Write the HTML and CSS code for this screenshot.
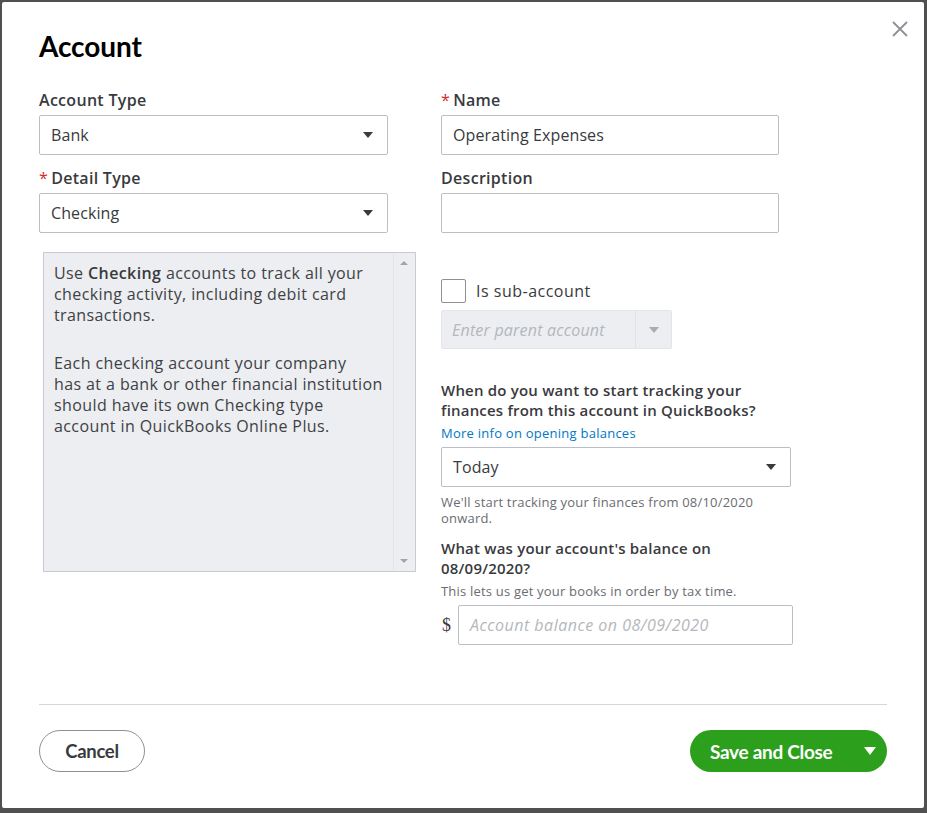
FILE: index.html
```html
<!DOCTYPE html>
<html>
<head>
<meta charset="utf-8">
<link rel="stylesheet" href="styles.css">
</head>
<body>
<div class="modal">
  <button class="close" aria-label="Close">
    <svg width="18" height="18" viewBox="0 0 18 18"><path d="M2 2 L16 16 M16 2 L2 16" stroke="#8d9096" stroke-width="1.8" fill="none"/></svg>
  </button>
  <h1 class="title">Account</h1>
  <div class="columns">
    <div class="col-left">
      <label class="label">Account Type</label>
      <div class="select">
        <span>Bank</span>
        <span class="caret"></span>
      </div>
      <label class="label label-gap"><span class="req">*</span>Detail Type</label>
      <div class="select">
        <span>Checking</span>
        <span class="caret"></span>
      </div>
      <div class="detail-box">
        <div class="detail-text">
          <p>Use <b>Checking</b> accounts to track all your checking activity, including debit card transactions.</p>
          <p>Each checking account your company<br>has at a bank or other financial institution<br>should have its own Checking type<br>account in QuickBooks Online Plus.</p>
        </div>
        <div class="scrollbar">
          <span class="sb-up"></span>
          <span class="sb-down"></span>
        </div>
      </div>
    </div>
    <div class="col-right">
      <label class="label"><span class="req">*</span>Name</label>
      <div class="input input-name">Operating Expenses</div>
      <label class="label label-gap">Description</label>
      <div class="input input-name"></div>
      <div class="check-row">
        <span class="checkbox"></span>
        <span class="check-label">Is sub-account</span>
      </div>
      <div class="parent">
        <span class="parent-text">Enter parent account</span>
        <span class="parent-btn"><span class="caret caret-light"></span></span>
      </div>
      <div class="question">When do you want to start tracking your finances from this account in QuickBooks?</div>
      <a class="link">More info on opening balances</a>
      <div class="select select-wide">
        <span>Today</span>
        <span class="caret"></span>
      </div>
      <div class="help">We'll start tracking your finances from 08/10/2020 onward.</div>
      <div class="question question2">What was your account's balance on 08/09/2020?</div>
      <div class="help help2">This lets us get your books in order by tax time.</div>
      <div class="balance-row">
        <span class="dollar">$</span>
        <div class="input input-balance"><span class="placeholder">Account balance on 08/09/2020</span></div>
      </div>
    </div>
  </div>
  <div class="footer">
    <button class="btn-cancel">Cancel</button>
    <button class="btn-save"><span>Save and Close</span><span class="caret caret-white"></span></button>
  </div>
</div>
</body>
</html>
```

FILE: styles.css
```css
* { box-sizing: border-box; }
html, body { margin: 0; padding: 0; }
body {
  background: #505050;
  width: 927px;
  height: 813px;
  overflow: hidden;
  font-family: "Open Sans", Lato, sans-serif;
  color: #393a3d;
  padding: 2px 3px 0 2px;
}
.modal {
  position: relative;
  background: #fff;
  height: 806px;
  border-radius: 2px;
  padding: 0 37px;
}
.close {
  position: absolute;
  top: 18px;
  right: 15px;
  border: 0;
  background: none;
  padding: 0;
  width: 18px;
  height: 18px;
}
.close svg { display: block; }
.title {
  margin: 0;
  padding-top: 28px;
  font-family: Lato, sans-serif;
  font-size: 28px;
  font-weight: 700;
  line-height: 32px;
  color: #000;
  letter-spacing: -0.1px;
}
.columns {
  display: grid;
  grid-template-columns: 376px 1fr;
  column-gap: 26px;
  margin-top: 28px;
}
.col-left, .col-right { display: flex; flex-direction: column; align-items: flex-start; }
.label {
  display: block;
  font-size: 16px;
  font-weight: 600;
  line-height: 20px;
  height: 20px;
  margin-bottom: 5px;
  color: #393a3d;
  letter-spacing: 0.3px;
}
.label-gap { margin-top: 13px; }
.req { color: #d52b1e; font-weight: 400; margin-right: 3px; }
.select, .input {
  width: 349px;
  height: 40px;
  border: 1px solid #babec5;
  border-radius: 2px;
  display: flex;
  align-items: center;
  justify-content: space-between;
  padding: 0 14px 0 11px;
  font-size: 16px;
  color: #393a3d;
  letter-spacing: 0.1px;
}
.input-name { width: 338px; }
.select-wide { width: 350px; }
.caret {
  width: 0; height: 0;
  border-left: 5.5px solid transparent;
  border-right: 5.5px solid transparent;
  border-top: 6px solid #393a3d;
}
.caret-light { border-top-color: #a8abb0; border-left-width: 5px; border-right-width: 5px; }
.caret-white { border-top-color: #fff; border-left-width: 6px; border-right-width: 6px; border-top-width: 8px; }
.detail-box {
  margin-top: 19px;
  margin-left: 4px;
  width: 373px;
  height: 320px;
  background: #eceef1;
  border: 1px solid #c9cbcf;
  display: flex;
}
.detail-text {
  flex: 1;
  padding: 10px 3px 0 10px;
  font-size: 16px;
  line-height: 21px;
  color: #404145;
  letter-spacing: 0.4px;
}
.detail-text p { margin: 0 0 27px; }
.detail-text b { color: #393a3d; font-weight: 600; }
.scrollbar {
  width: 22px;
  position: relative;
  background: #edeef1;
  border-left: 1px solid #e4e5e8;
}
.sb-up, .sb-down {
  position: absolute;
  left: 6px;
  width: 0; height: 0;
  border-left: 4px solid transparent;
  border-right: 4px solid transparent;
}
.sb-up { top: 8px; border-bottom: 4px solid #a3a5a9; }
.sb-down { bottom: 8px; border-top: 4px solid #a3a5a9; }
.check-row {
  display: flex;
  align-items: center;
  margin-top: 46px;
  height: 24px;
}
.checkbox {
  width: 25px;
  height: 24px;
  border: 1px solid #8d9096;
  border-radius: 2px;
  background: #fff;
}
.check-label { margin-left: 10px; font-size: 16px; color: #393a3d; letter-spacing: 0.5px; }
.parent {
  margin-top: 7px;
  width: 231px;
  height: 39px;
  background: #eceef1;
  border: 1px solid #e3e5e8;
  border-radius: 2px;
  display: flex;
}
.parent-text {
  flex: 1;
  display: flex;
  align-items: center;
  padding-left: 10px;
  font-style: italic;
  color: #b4b7bc;
  font-size: 16px;
  letter-spacing: 0.2px;
}
.parent-btn {
  width: 36px;
  border-left: 1px solid #dfe1e4;
  display: flex;
  align-items: center;
  justify-content: center;
}
.question {
  margin-top: 31px;
  font-size: 15px;
  font-weight: 600;
  line-height: 20px;
  color: #393a3d;
  width: 340px;
  letter-spacing: 0.2px;
}
.link {
  margin-top: 5px;
  font-size: 13px;
  line-height: 16px;
  color: #0077c5;
  letter-spacing: 0.25px;
}
.select-wide { margin-top: 6px; }
.help {
  margin-top: 7px;
  font-size: 13px;
  line-height: 16px;
  color: #6b6c72;
  width: 340px;
  letter-spacing: 0.2px;
}
.question2 { margin-top: 12px; width: 300px; }
.help2 { margin-top: 5px; width: 340px; }
.balance-row {
  display: flex;
  align-items: center;
  margin-top: 6px;
}
.dollar { font-family: "Liberation Serif", serif; font-size: 18px; color: #393a3d; width: 17px; padding-left: 1px; }
.input-balance { width: 335px; }
.placeholder { font-style: italic; color: #b4b7bc; font-size: 16px; letter-spacing: 0.5px; }
.footer {
  margin-top: 59px;
  border-top: 1px solid #d4d7dc;
  padding-top: 25px;
  display: flex;
  justify-content: space-between;
}
.btn-cancel {
  width: 106px;
  height: 42px;
  border: 1px solid #8d9096;
  border-radius: 21px;
  background: #fff;
  font-family: Lato, sans-serif;
  font-weight: 700;
  font-size: 18.5px;
  color: #393a3d;
  letter-spacing: -0.3px;
}
.btn-save {
  width: 197px;
  height: 42px;
  border: 0;
  border-radius: 21px;
  background: #2ca01c;
  color: #fff;
  font-family: Lato, sans-serif;
  font-weight: 700;
  font-size: 19px;
  letter-spacing: -0.3px;
  display: flex;
  align-items: center;
  padding: 0 11px 0 20px;
  justify-content: space-between;
}
```
